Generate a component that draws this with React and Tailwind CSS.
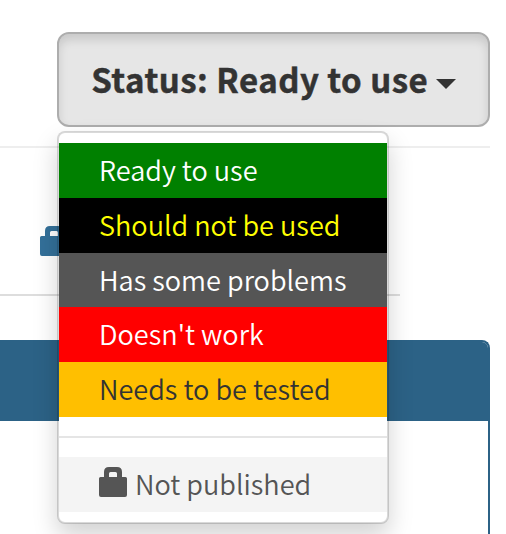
import React from "react";

const statuses = [
  { label: "Ready to use", style: "bg-[#008000] text-white" },
  { label: "Should not be used", style: "bg-black text-[#ffff00]" },
  { label: "Has some problems", style: "bg-[#555555] text-white" },
  { label: "Doesn't work", style: "bg-[#ff0000] text-white" },
  { label: "Needs to be tested", style: "bg-[#ffbf00] text-[#333333]" },
];

function LockIcon({ className }) {
  return (
    <svg viewBox="0 0 28 30" className={className} fill="currentColor" aria-hidden="true">
      <path
        fillRule="evenodd"
        d="M1.5 10H5V5Q5 0 10 0H18Q23 0 23 5V10H26.5Q28 10 28 11.5V28Q28 30 26 30H2Q0 30 0 28V11.5Q0 10 1.5 10ZM10 10H18V6.5Q18 5 16.5 5H11.5Q10 5 10 6.5Z"
      />
    </svg>
  );
}

function StatusMenu() {
  return (
    <ul className="absolute left-[57px] top-[131px] h-[393px] w-[332px] rounded-[8px] border-2 border-black/15 bg-white bg-clip-padding py-[10px] text-[27.1px] font-[350] leading-[53.2px] shadow-[0_12px_24px_rgba(0,0,0,0.175)]">
      {statuses.map((s) => (
        <li key={s.label} className={`h-[54.8px] whitespace-nowrap pl-10 ${s.style}`}>
          {s.label}
        </li>
      ))}
      <li className="mb-[19px] mt-[19px] h-[2px] bg-[#e5e5e5]" />
      <li className="flex h-[55px] whitespace-nowrap bg-[#f4f4f4] pl-10 text-[#555555]">
        <LockIcon className="mr-2 mt-[10px] h-[30px] w-7" />
        Not published
      </li>
    </ul>
  );
}

export default function App() {
  return (
    <div className="relative h-[534px] w-[506px] overflow-hidden bg-white font-['Noto_Sans_CJK_SC','Noto_Sans',sans-serif]">
      <header className="mr-4 h-[148px] border-b-2 border-[#eeeeee] pl-[57px] pt-8">
        <button className="flex h-[95px] w-[433px] items-center whitespace-nowrap rounded-[12px] border-2 border-[#adadad] bg-[#e6e6e6] pb-[1px] pl-[32.3px] text-left text-[33px] font-bold leading-none tracking-[0.5px] text-[#333333] shadow-[inset_0_6px_10px_rgba(0,0,0,0.125)] [-webkit-text-stroke:0.45px_#333333]">
          Status: Ready to use
          <span className="ml-[7.5px] mt-[9px] border-x-[10px] border-t-[10px] border-x-transparent border-t-[#333333]" />
        </button>
      </header>
      <div className="h-[148px] w-[400px] border-b-2 border-[#dddddd] pl-10 pt-[78px] text-[#337099]">
        <LockIcon className="h-[30px] w-7" />
      </div>
      <section className="mr-4 mt-[44px] h-[220px] rounded-tr-[8px] border-r-2 border-t-2 border-[#2c6286]">
        <div className="h-[79px] rounded-tr-[6px] bg-[#2c6286]" />
      </section>
      <StatusMenu />
    </div>
  );
}
